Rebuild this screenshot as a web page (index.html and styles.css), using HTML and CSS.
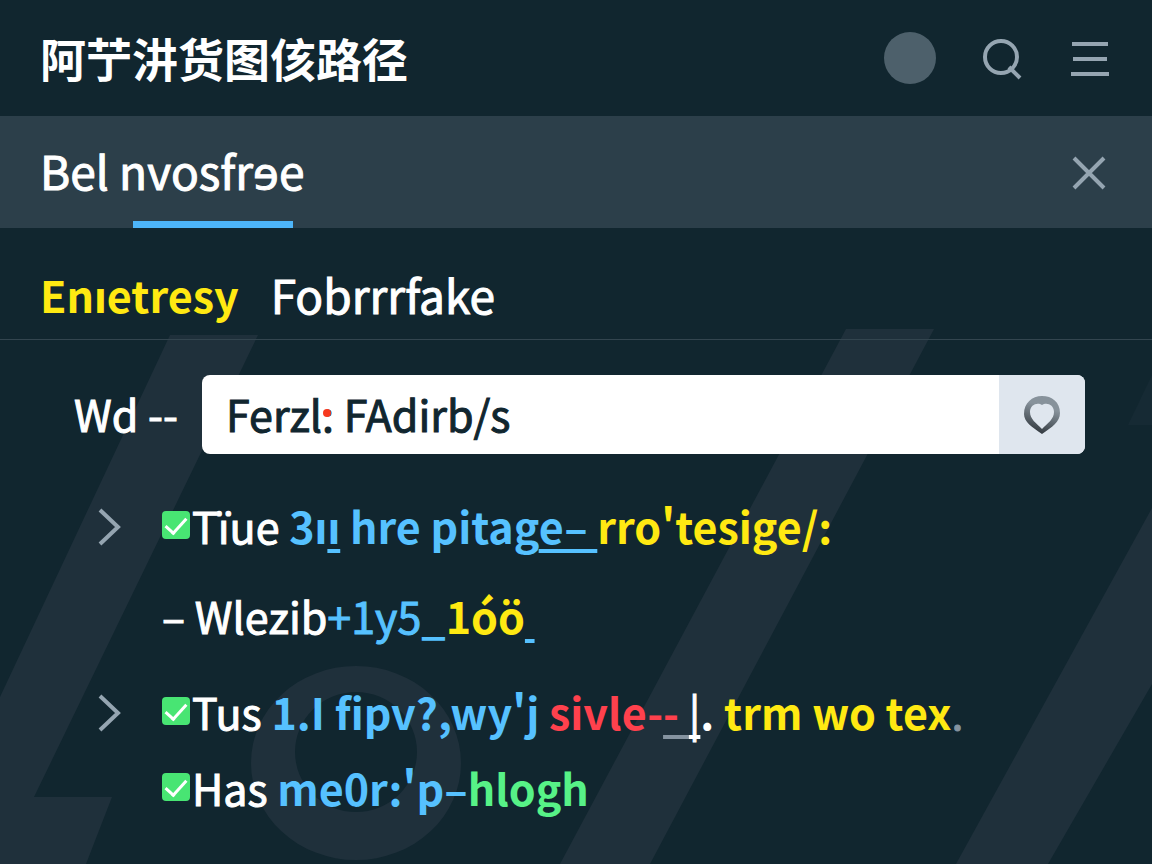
FILE: index.html
```
<!DOCTYPE html>
<html lang="zh-CN">
<head>
    <meta charset="UTF-8">
    <meta name="viewport" content="width=device-width, initial-scale=1.0">
    <title>Bel nvosfree</title>
    <link rel="stylesheet" href="styles.css">
</head>
<body>
    <svg class="backdrop" viewBox="0 0 1152 864" preserveAspectRatio="xMinYMin slice" aria-hidden="true">
        <path d="M170 335H258L34 797H112L86 864H0V697Z"/>
        <path d="M846 329H934L650 864H560Z"/>
        <path d="M1152 508V684L1048 864H956Z"/>
        <path class="faint" d="M1152 375L1128 425H1152Z"/>
        <path fill-rule="evenodd" d="M251 763a105 97 0 1 0 210 0a105 97 0 1 0 -210 0ZM295 752a61 60 0 1 0 122 0a61 60 0 1 0 -122 0Z"/>
    </svg>

    <header class="header">
        <h1 class="title">阿艼汫货图侅路径</h1>
        <div class="actions">
            <button class="avatar" aria-label="Profile"></button>
            <button class="icon-button" aria-label="Search">
                <svg width="42" height="44" viewBox="0 0 42 44"><circle cx="19" cy="21" r="16"/><path d="M27 31L38 42"/></svg>
            </button>
            <button class="icon-button" aria-label="Menu">
                <svg width="40" height="40" viewBox="0 0 40 40"><path d="M2 6H38M3 21H37M1 36H39"/></svg>
            </button>
        </div>
    </header>

    <div class="subbar">
        <h2 class="subtitle">Bel <span class="current">nvosfrɘe</span></h2>
        <button class="icon-button" aria-label="Close">
            <svg width="40" height="40" viewBox="0 0 40 40"><path d="M4 6L34 36M34 6L4 36"/></svg>
        </button>
    </div>

    <nav class="tabs">
        <a class="tab active" href="#">Enıetresy</a>
        <a class="tab" href="#">Fobrrrfake</a>
    </nav>

    <main class="content">
        <div class="search">
            <label for="query">Wd --</label>
            <div class="field">
                <input type="text" id="query" value="Ferzl: FAdirb/s">
                <span class="dot"></span>
                <button class="save" aria-label="Save">
                    <svg width="36" height="38" viewBox="0 0 36 38">
                        <defs>
                            <linearGradient id="shade" x1="0.7" y1="0" x2="0.4" y2="1">
                                <stop offset="0.3" stop-color="#87929b"/>
                                <stop offset="1" stop-color="#30373d"/>
                            </linearGradient>
                        </defs>
                        <path fill="url(#shade)" fill-rule="evenodd" d="M18 0C28 0 36 6 36 17C36 26 28 31 18 38C8 31 0 26 0 18C0 7 8 0 18 0ZM18 9C14 6 6 8 6 16C6 23 12 27 18 33C24 27 30 23 30 16C30 8 22 6 18 9Z"/>
                    </svg>
                </button>
            </div>
        </div>

        <ul class="list">
            <li class="row">
                <button class="toggle" aria-label="Expand"><svg width="24" height="38" viewBox="0 0 24 38"><path d="M2 2L20 19L2 36"/></svg></button>
                <label class="item"><input type="checkbox" checked><span>Tïue <b class="blue">3ı<u>ı</u> hre pitag<u>e– </u></b><b class="yellow">rro'tesige/:</b></span></label>
            </li>
            <li class="row plain">
                <span class="item"><span>– Wlezib<span class="blue">+1y5<b>_</b></span><b class="yellow">1óö</b><u class="blue"> </u></span></span>
            </li>
            <li class="row nested">
                <button class="toggle" aria-label="Expand"><svg width="24" height="38" viewBox="0 0 24 38"><path d="M2 2L20 19L2 36"/></svg></button>
                <label class="item"><input type="checkbox" checked><span>Tus <b class="blue">1.I fipv?,wy'j</b> <b class="red">sivle-<u class="mark">- </u></b><u>|</u><b>. </b><b class="yellow">trm wo tex</b><span class="gray">.</span></span></label>
            </li>
            <li class="row short">
                <label class="item"><input type="checkbox" checked><span>Has <b class="blue">me0r:'p–</b><b class="green">hlogh</b></span></label>
            </li>
        </ul>
    </main>
</body>
</html>
```
FILE: styles.css
```
* {
    box-sizing: border-box;
}
body {
    margin: 0;
    min-height: 100vh;
    position: relative;
    overflow-x: hidden;
    background-color: #11262f;
    color: #fff;
    font-family: "Noto Sans CJK SC", "Noto Sans", sans-serif;
    font-size: 43px;
    line-height: 60px;
    -webkit-text-stroke: 1px;
}
b,
.title,
.tab.active {
    -webkit-text-stroke: 0;
}
button {
    padding: 0;
    border: none;
    background: none;
    cursor: pointer;
}
button svg {
    display: block;
}
.backdrop {
    position: absolute;
    inset: 0;
    z-index: -1;
    width: 100%;
    height: 100%;
    fill: #1f303b;
}
.backdrop .faint {
    fill: #162a34;
}
.header,
.subbar {
    display: flex;
    align-items: center;
    justify-content: space-between;
    padding: 0 42px 0 40px;
}
.header {
    height: 116px;
}
.title,
.subtitle {
    margin: 0;
    font-size: 46px;
}
.title {
    padding-bottom: 2px;
    font-weight: 700;
}
.subtitle {
    font-weight: 400;
}
.actions {
    display: flex;
    align-items: center;
    gap: 46px;
}
.avatar {
    width: 52px;
    height: 52px;
    border-radius: 50%;
    background-color: #4d606b;
}
.icon-button svg,
.toggle svg {
    fill: none;
    stroke: #95a5b1;
    stroke-width: 4;
}
.subbar {
    height: 112px;
    background-color: #2c3f4a;
}
.current {
    display: inline-block;
    height: 112px;
    line-height: 108px;
    background: linear-gradient(#4db5f9, #4db5f9) 14px 100% / 160px 7px no-repeat;
}
.tabs {
    display: flex;
    align-items: center;
    gap: 32px;
    height: 112px;
    padding: 20px 40px 0;
    border-bottom: 1px solid #33454f;
}
.tab {
    color: #fff;
    font-size: 46px;
    text-decoration: none;
}
.tab.active {
    color: #ffe912;
    font-size: 43px;
    font-weight: 700;
}
.content {
    padding: 35px 67px 0 74px;
}
.search {
    display: flex;
    align-items: center;
    gap: 20px;
}
.search label {
    flex: none;
    width: 108px;
    padding-bottom: 4px;
    white-space: nowrap;
}
.field {
    display: flex;
    flex: 1;
    position: relative;
    height: 79px;
    border-radius: 8px;
    overflow: hidden;
    background-color: #fff;
}
.field input {
    flex: 1;
    min-width: 0;
    padding: 0 24px 4px;
    border: none;
    background: none;
    color: #11262f;
    font: inherit;
    -webkit-text-stroke: inherit;
}
/* red upper half of the colon */
.dot {
    position: absolute;
    left: 121px;
    top: 34px;
    width: 8px;
    height: 8px;
    border-radius: 50%;
    background-color: #f7391f;
}
.save {
    display: flex;
    align-items: center;
    justify-content: center;
    width: 86px;
    background-color: #dfe6ee;
}
.list {
    margin: 0;
    padding: 24px 0 0;
    list-style: none;
}
.row {
    display: flex;
    align-items: center;
    height: 98px;
    padding-left: 24px;
    white-space: nowrap;
}
.row.plain,
.row.short {
    padding-left: 88px;
}
.row.plain {
    height: 82px;
}
.row.nested {
    height: 110px;
}
.row.short {
    height: 42px;
}
.toggle {
    width: 64px;
}
.item {
    display: flex;
    align-items: center;
    padding-bottom: 4px;
    white-space: pre;
}
.item input {
    appearance: none;
    display: grid;
    place-items: center;
    width: 28px;
    height: 28px;
    margin: 0 2px 0 0;
    border-radius: 4px;
    background-color: #48e573;
}
.item input:checked::after {
    content: "";
    width: 9px;
    height: 18px;
    border: solid #fff;
    border-width: 0 3px 3px 0;
    transform: translateY(-2px) rotate(42deg);
}
.item u {
    text-decoration-thickness: 4px;
    text-underline-offset: 5px;
    text-decoration-skip-ink: none;
}
.item .mark {
    text-decoration-color: #8593a0;
}
.blue {
    color: #56c1ff;
}
.yellow {
    color: #ffe912;
}
.red {
    color: #ff414d;
}
.green {
    color: #57f287;
}
.gray {
    color: #8593a0;
}
```
